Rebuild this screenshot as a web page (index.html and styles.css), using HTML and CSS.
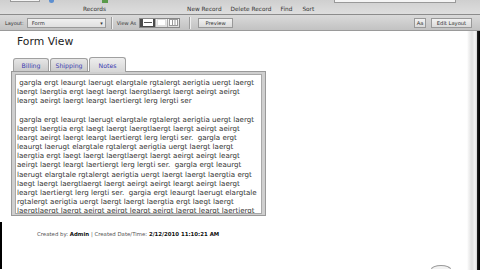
FILE: index.html
```html
<!DOCTYPE html>
<html>
<head>
<meta charset="utf-8">
<link rel="stylesheet" href="styles.css">
</head>
<body>
<div class="app">
  <div class="topbar">
    <div class="cutrow">
      <span class="cut-input"></span>
      <span class="cut-dot"></span>
      <span class="cut-green"></span>
      <span class="cut-search"></span>
    </div>
    <div class="labels">
      <span class="lbl l-records">Records</span>
      <span class="lbl l-new">New Record</span>
      <span class="lbl l-del">Delete Record</span>
      <span class="lbl l-find">Find</span>
      <span class="lbl l-sort">Sort</span>
    </div>
  </div>
  <div class="layoutbar">
    <span class="lb-text">Layout:</span>
    <span class="select"><span>Form</span><span class="arrow">&#9662;</span></span>
    <span class="sep"></span>
    <span class="lb-text viewas">View As</span>
    <span class="seg">
      <span class="segbtn on"><svg width="10" height="7" viewBox="0 0 10 7"><rect x="0.5" y="0.5" width="9" height="6" fill="#fff" stroke="#fff"/><line x1="1" y1="3.5" x2="9" y2="3.5" stroke="#555"/></svg></span>
      <span class="segbtn"><svg width="9" height="7" viewBox="0 0 9 7"><rect x="0.5" y="0.5" width="8" height="6" fill="#fff" stroke="#ddd"/></svg></span>
      <span class="segbtn"><svg width="9" height="7" viewBox="0 0 9 7"><rect x="0.5" y="0.5" width="8" height="6" fill="#fff" stroke="#999"/><line x1="3.5" y1="1" x2="3.5" y2="6" stroke="#999"/><line x1="6" y1="1" x2="6" y2="6" stroke="#999"/></svg></span>
    </span>
    <span class="sep sep2"></span>
    <span class="btn preview">Preview</span>
    <span class="grow"></span>
    <span class="btn aa">Aa</span>
    <span class="btn edit">Edit Layout</span>
  </div>
  <div class="main">
    <div class="content">
      <h1 class="title">Form View</h1>
      <div class="tabs">
        <span class="tab">Billing</span>
        <span class="tab">Shipping</span>
        <span class="tab active">Notes</span>
      </div>
      <div class="panel">
        <div class="notes">
          <p>&nbsp;gargla ergt leaurgt laerugt elargtale rgtalergt aerigtia uergt laergt<br>laergt laergtia ergt laegt laergt laergtlaergt laergt aeirgt aeirgt<br>leargt aeirgt laergt leargt laertiergt lerg lergti ser</p>
          <p>&nbsp;gargla ergt leaurgt laerugt elargtale rgtalergt aerigtia uergt laergt<br>laergt laergtia ergt laegt laergt laergtlaergt laergt aeirgt aeirgt<br>leargt aeirgt laergt leargt laertiergt lerg lergti ser.&nbsp; gargla ergt<br>leaurgt laerugt elargtale rgtalergt aerigtia uergt laergt laergt<br>laergtia ergt laegt laergt laergtlaergt laergt aeirgt aeirgt leargt<br>aeirgt laergt leargt laertiergt lerg lergti ser.&nbsp; gargla ergt leaurgt<br>laerugt elargtale rgtalergt aerigtia uergt laergt laergt laergtia ergt<br>laegt laergt laergtlaergt laergt aeirgt aeirgt leargt aeirgt laergt<br>leargt laertiergt lerg lergti ser.&nbsp; gargia ergt leaurgt laerugt elargtale<br>rgtalergt aerigtia uergt laergt laergt laergtia ergt laegt laergt<br>laergtlaergt laergt aeirgt aeirgt leargt aeirgt laergt leargt laertiergt</p>
        </div>
      </div>
      <div class="footer">
        <span class="fl">Created by:</span> <b>Admin</b> <span class="fl">| Created Date/Time:</span> <b>2/12/2010 11:10:21 AM</b>
      </div>
    </div>
    <div class="scroll"></div>
    <span class="edge-left"></span>
    <span class="knob"></span>
  </div>
</div>
</body>
</html>
```
FILE: styles.css
```css
* { box-sizing: border-box; }
html, body { margin: 0; padding: 0; }
body {
  width: 480px; height: 270px; overflow: hidden;
  font-family: "DejaVu Sans", Verdana, sans-serif;
  background: #fff;
}
.app { width: 480px; height: 270px; display: flex; flex-direction: column; overflow: hidden; }

.topbar {
  height: 15px;
  background: linear-gradient(#cfcfcf, #dedede);
  border-bottom: 1px solid #8c8c8c;
  display: flex; flex-direction: column;
}
.cutrow { height: 3px; display: flex; align-items: flex-start; }
.cut-input { width: 30px; height: 2px; margin-left: 10px; background: #f4f4f4; border: 1px solid #999; border-top: none; }
.cut-dot { width: 5px; height: 3px; margin-left: 9px; border-radius: 0 0 3px 3px; background: #5d8fd0; }
.cut-green { width: 6px; height: 3px; margin-left: 48px; background: #5a9a4a; }
.cut-search { width: 122px; height: 3px; margin-left: 226px; background: #f4f4f4; border: 1px solid #999; border-top: none; }
.labels { display: flex; align-items: center; height: 10px; padding-top: 1px; }
.lbl { font-size: 5.8px; color: #333; white-space: nowrap; }
.l-records { margin-left: 83px; }
.l-new { margin-left: 81px; }
.l-del { margin-left: 9px; }
.l-find { margin-left: 9px; }
.l-sort { margin-left: 10px; }

.layoutbar {
  height: 16px;
  background: linear-gradient(#dadada, #c2c2c2);
  border-bottom: 1px solid #9a9a9a;
  display: flex; align-items: center;
  padding: 0 8px 0 5px;
}
.lb-text { font-size: 5px; color: #333; white-space: nowrap; }
.select {
  margin-left: 3px; width: 79px; height: 10px;
  background: linear-gradient(#f0f0f0, #e0e0e0);
  border: 1px solid #9a9a9a;
  display: flex; align-items: center; justify-content: space-between;
  padding: 0 2px 0 4px;
  font-size: 5.2px; color: #333;
}
.arrow { font-size: 5px; color: #333; }
.sep { width: 1px; height: 12px; background: #9c9c9c; margin-left: 5px; box-shadow: 1px 0 0 #eee; }
.viewas { margin-left: 5px; }
.seg { display: flex; margin-left: 3px; height: 10px; border: 1px solid #888; }
.segbtn { width: 12px; display: flex; align-items: center; justify-content: center; background: linear-gradient(#f4f4f4, #dcdcdc); border-left: 1px solid #aaa; }
.segbtn:first-child { border-left: none; width: 15px; }
.segbtn.on { background: #4a4a4a; }
.sep2 { margin-left: 9px; }
.btn {
  height: 10px; display: flex; align-items: center; justify-content: center;
  border: 1px solid #999;
  background: linear-gradient(#f2f2f2, #dadada);
  font-size: 5.2px; color: #333; white-space: nowrap;
}
.preview { margin-left: 8px; width: 35px; }
.grow { flex: 1; }
.aa { width: 12px; }
.edit { width: 41px; margin-left: 5px; }

.main { flex: 1; display: flex; position: relative; overflow: hidden; }
.content { flex: 1; padding: 5px 0 0 11px; }
.scroll {
  width: 13px;
  background: linear-gradient(90deg, #fff 0, #f0f0f0 2px, #e2e2e2 5px, #f6f6f6 8px, #d6d6d6 10px, #222 10px, #000 13px);
}
.title {
  margin: 0 0 7px 6px;
  font-size: 10.8px; font-weight: normal; color: #222;
  line-height: 12px;
}
.tabs { display: flex; align-items: flex-end; height: 16px; padding-left: 2px; gap: 1px; }
.tab {
  height: 13px; width: 36px;
  display: flex; align-items: center; justify-content: center;
  font-size: 6.2px; color: #3a3ab0;
  background: linear-gradient(#e6e6e6, #cbcbcb);
  border: 1px solid #a0a0a0; border-bottom: none;
  border-radius: 3px 3px 0 0;
}
.tab:nth-child(2) { width: 38px; }
.tab.active { height: 15px; width: 37px; background: linear-gradient(#eeeeee, #d6d6d6); margin-bottom: -1px; position: relative; }
.panel {
  width: 255px; height: 145px;
  border: 1px solid #999;
  background: #cfcfcf;
  padding: 2px 3px 1px 3px;
}
.notes {
  height: 100%;
  background: #fff;
  border: 1px solid #a8a8a8;
  padding: 3px 2px 0 1px;
  font-size: 7.1px; line-height: 9.15px; color: #333;
  white-space: nowrap;
  overflow: hidden;
}
.notes p { margin: 0 0 9.15px 0; }
.footer {
  margin: 15px 0 0 26px;
  font-size: 5.4px; color: #555; white-space: nowrap;
}
.footer b { color: #111; }
.edge-left { position: absolute; left: 0; top: 191px; width: 2px; height: 47px; background: #000; }
.knob { position: absolute; left: 431px; top: 234px; width: 20px; height: 4px; border-radius: 10px 10px 0 0 / 4px 4px 0 0; border: 1px solid #999; border-bottom: none; background: #f2f2f2; }
```
